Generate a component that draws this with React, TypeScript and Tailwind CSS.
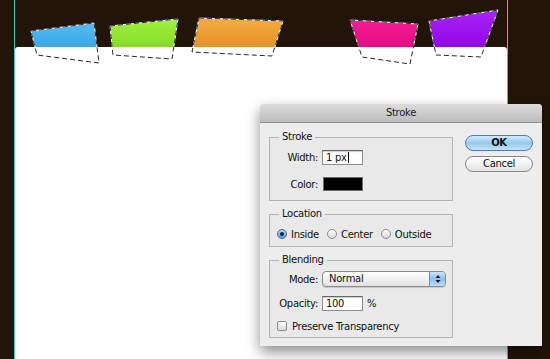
import React from "react";

const tabs = [
  { id: "tab-blue", pts: "31,31 94,23 99,63 37,55", from: "#55bbf1", to: "#2c98df" },
  { id: "tab-green", pts: "110,26 178,19 172,59 113,55", from: "#9ef23e", to: "#7ed21e" },
  { id: "tab-orange", pts: "199,18 283,21 272,56 192,52", from: "#f5ab40", to: "#df8a22" },
  { id: "tab-pink", pts: "350,20 418,24 410,64 362,57", from: "#f41c93", to: "#df0079" },
  { id: "tab-purple", pts: "429,21 498,10 481,57 436,55", from: "#a824f7", to: "#8900e3" },
];

function Tabs() {
  return (
    <svg className="absolute left-0 top-0 pointer-events-none" width="550" height="80" viewBox="0 0 550 80">
      <defs>
        <clipPath id="above-panel">
          <rect x="0" y="0" width="550" height="47" />
        </clipPath>
        {tabs.map((t) => (
          <linearGradient key={t.id} id={t.id} x1="0" y1="0" x2="0" y2="1">
            <stop offset="0" stopColor={t.from} />
            <stop offset="1" stopColor={t.to} />
          </linearGradient>
        ))}
      </defs>
      {tabs.map((t) => (
        <g key={t.id}>
          <polygon points={t.pts} fill={`url(#${t.id})`} clipPath="url(#above-panel)" />
          <polygon points={t.pts} fill="none" stroke="#ffffff" strokeWidth="1" />
          <polygon points={t.pts} fill="none" stroke="#2a2a2a" strokeWidth="1" strokeDasharray="5 3" />
        </g>
      ))}
    </svg>
  );
}

function Field({ children, w = "w-[41px]" }: { children: React.ReactNode; w?: string }) {
  return (
    <div className={`${w} h-[15px] ml-[4px] bg-white border border-[#8e8e8e] border-t-[#666] shadow-[inset_0_1px_1px_rgba(0,0,0,0.2)] flex items-center pl-[3px] leading-none`}>
      {children}
    </div>
  );
}

function Radio({ on, label }: { on?: boolean; label: string }) {
  return (
    <div className="flex items-center mr-[8px]">
      {on ? (
        <span className="w-[10px] h-[10px] rounded-full border border-[#41669a] bg-gradient-to-b from-[#b9d8f6] to-[#5f9ad8] flex items-center justify-center">
          <span className="w-[4px] h-[4px] rounded-full bg-[#14243a]" />
        </span>
      ) : (
        <span className="w-[10px] h-[10px] rounded-full border border-[#8d8d8d] bg-gradient-to-b from-white to-[#d9d9d9]" />
      )}
      <span className="ml-[4px]">{label}</span>
    </div>
  );
}

function Group({ title, className, children }: { title: string; className: string; children: React.ReactNode }) {
  return (
    <fieldset className={`border border-[#b3b3b3] bg-[#e9e9e9] ${className}`}>
      <legend className="ml-[9px] px-[3px] leading-[14px]">{title}</legend>
      {children}
    </fieldset>
  );
}

function StrokeDialog() {
  return (
    <div className="absolute left-[260px] top-[104px] w-[282px] h-[242px] bg-[#ededed] rounded-t-[4px] shadow-[0_6px_14px_rgba(0,0,0,0.45)] font-['DejaVu_Sans',sans-serif] text-[10px] tracking-[-0.3px] text-[#111]">
      <div className="h-[19px] rounded-t-[4px] bg-gradient-to-b from-[#dcdcdc] to-[#bdbdbd] border-b border-[#8f8f8f] flex items-center justify-center leading-none text-[#1a1a1a]">
        Stroke
      </div>
      <div className="flex pt-[7px] pl-[9px]">
        <div className="w-[184px] flex flex-col">
          <Group title="Stroke" className="pt-[6px] pb-[9px]">
            <div className="flex items-center h-[15px]">
              <span className="w-[48px] text-right">Width:</span>
              <Field>
                1 px<span className="ml-[1px] w-px h-[11px] bg-black" />
              </Field>
            </div>
            <div className="flex items-center h-[14px] mt-[12px]">
              <span className="w-[48px] text-right">Color:</span>
              <span className="ml-[5px] w-[40px] h-[14px] bg-black border border-[#6a6a6a]" />
            </div>
          </Group>

          <Group title="Location" className="mt-[6px] pt-[6px] pb-[5px]">
            <div className="flex items-center h-[14px] pl-[7px]">
              <Radio on label="Inside" />
              <Radio label="Center" />
              <Radio label="Outside" />
            </div>
          </Group>

          <Group title="Blending" className="mt-[6px] pt-[4px] pb-[5px]">
            <div className="flex items-center h-[16px]">
              <span className="w-[48px] text-right">Mode:</span>
              <div className="ml-[4px] w-[124px] h-[16px] rounded-[4px] border border-[#8a8a8a] bg-gradient-to-b from-white to-[#e2e2e2] flex shadow-[0_1px_1px_rgba(0,0,0,0.15)]">
                <span className="flex-1 pl-[6px] flex items-center leading-none">Normal</span>
                <span className="w-[16px] rounded-r-[3px] border-l border-[#6d8fbb] bg-gradient-to-b from-[#cde5fb] via-[#8cbfef] to-[#bcdcf9] flex items-center justify-center">
                  <svg width="6" height="10" viewBox="0 0 6 10">
                    <path d="M3 1 L5.5 4 H0.5 Z M3 9 L5.5 6 H0.5 Z" fill="#1a1a1a" />
                  </svg>
                </span>
              </div>
            </div>
            <div className="flex items-center h-[15px] mt-[9px]">
              <span className="w-[48px] text-right">Opacity:</span>
              <Field>100</Field>
              <span className="ml-[4px]">%</span>
            </div>
            <div className="flex items-center h-[12px] mt-[9px] pl-[7px]">
              <span className="w-[10px] h-[10px] rounded-[2px] border border-[#8a8a8a] bg-gradient-to-b from-white to-[#dadada]" />
              <span className="ml-[5px]">Preserve Transparency</span>
            </div>
          </Group>
        </div>

        <div className="ml-[12px] w-[68px] flex flex-col">
          <button className="mt-[5px] h-[16px] rounded-full border border-[#4f7db8] bg-gradient-to-b from-[#d5ebfd] via-[#96c8f2] to-[#c4e2fb] font-bold leading-none text-[#111]">
            OK
          </button>
          <button className="mt-[5px] h-[16px] rounded-full border border-[#868686] bg-gradient-to-b from-white via-[#f1f1f1] to-[#e2e2e2] leading-none text-[#111]">
            Cancel
          </button>
        </div>
      </div>
    </div>
  );
}

export default function App() {
  return (
    <div className="relative w-[550px] h-[359px] overflow-hidden bg-[#221408] flex">
      <div className="w-[14px] shrink-0" />
      <div className="w-[494px] shrink-0 flex flex-col border-x border-[#3fc8c5]">
        <div className="h-[47px] shrink-0" />
        <div className="flex-1 bg-white rounded-t-[3px]" />
      </div>
      <Tabs />
      <StrokeDialog />
    </div>
  );
}
